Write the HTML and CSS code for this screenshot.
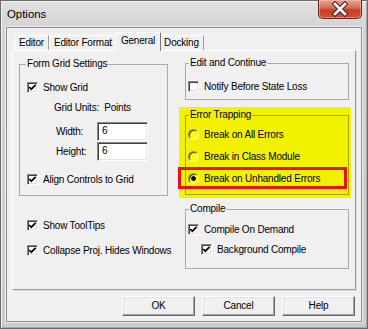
FILE: index.html
```html
<!DOCTYPE html>
<html>
<head>
<meta charset="utf-8">
<link rel="stylesheet" href="styles.css">
</head>
<body>
<div class="window">
  <div class="titlebar">
    <span class="title">Options</span>
    <div class="close">
      <svg width="42" height="18" viewBox="0 0 42 18">
        <path d="M16 4 L26 14 M26 4 L16 14" stroke="#3a2a28" stroke-width="4.6" stroke-linecap="square"/>
        <path d="M16 4 L26 14 M26 4 L16 14" stroke="#ffffff" stroke-width="2.6" stroke-linecap="square"/>
      </svg>
    </div>
  </div>
  <div class="client">
    <div class="tabs">
      <div class="tab">Editor</div>
      <div class="tab">Editor Format</div>
      <div class="tab active">General</div>
      <div class="tab">Docking</div>
    </div>
    <div class="panel">
      <div class="col col-left">
        <fieldset class="group grid-group">
          <legend>Form Grid Settings</legend>
          <div class="row"><span class="box"><svg width="9" height="9" viewBox="0 0 9 9"><polyline points="1.3,4 3.3,6.2 7.6,1.8" fill="none" stroke="#000" stroke-width="1.7"/></svg></span>Show Grid</div>
          <div class="units">Grid Units:&nbsp; Points</div>
          <div class="field first"><span class="flabel">Width:</span><span class="input">6</span></div>
          <div class="field"><span class="flabel">Height:</span><span class="input">6</span></div>
          <div class="row align"><span class="box"><svg width="9" height="9" viewBox="0 0 9 9"><polyline points="1.3,4 3.3,6.2 7.6,1.8" fill="none" stroke="#000" stroke-width="1.7"/></svg></span>Align Controls to Grid</div>
        </fieldset>
        <div class="row outer tips"><span class="box"><svg width="9" height="9" viewBox="0 0 9 9"><polyline points="1.3,4 3.3,6.2 7.6,1.8" fill="none" stroke="#000" stroke-width="1.7"/></svg></span>Show ToolTips</div>
        <div class="row outer collapse"><span class="box"><svg width="9" height="9" viewBox="0 0 9 9"><polyline points="1.3,4 3.3,6.2 7.6,1.8" fill="none" stroke="#000" stroke-width="1.7"/></svg></span>Collapse Proj. Hides Windows</div>
      </div>
      <div class="col col-right">
        <fieldset class="group edit-group">
          <legend>Edit and Continue</legend>
          <div class="row"><span class="box"></span>Notify Before State Loss</div>
        </fieldset>
        <div class="highlight">
          <fieldset class="group error-group">
            <legend>Error Trapping</legend>
            <div class="row"><span class="radio"></span>Break on All Errors</div>
            <div class="row r2"><span class="radio"></span>Break in Class Module</div>
            <div class="row r2 marked"><span class="radio on"></span>Break on Unhandled Errors</div>
          </fieldset>
        </div>
        <fieldset class="group compile-group">
          <legend>Compile</legend>
          <div class="row"><span class="box"><svg width="9" height="9" viewBox="0 0 9 9"><polyline points="1.3,4 3.3,6.2 7.6,1.8" fill="none" stroke="#000" stroke-width="1.7"/></svg></span>Compile On Demand</div>
          <div class="row bg"><span class="box"><svg width="9" height="9" viewBox="0 0 9 9"><polyline points="1.3,4 3.3,6.2 7.6,1.8" fill="none" stroke="#000" stroke-width="1.7"/></svg></span>Background Compile</div>
        </fieldset>
      </div>
    </div>
    <div class="buttons">
      <div class="btn">OK</div>
      <div class="btn">Cancel</div>
      <div class="btn">Help</div>
    </div>
  </div>
</div>
</body>
</html>
```

FILE: styles.css
```css
* { box-sizing: border-box; }
html, body { margin: 0; padding: 0; }
body {
  width: 368px;
  height: 329px;
  overflow: hidden;
  font-family: "Liberation Sans", Arial, sans-serif;
  font-size: 10px;
  letter-spacing: -0.2px;
  color: #000;
  background: #c8c8c8;
}
.window {
  width: 368px;
  height: 329px;
  border: 1px solid #6a6a6a;
  background: linear-gradient(#e0e0e0, #d4d4d4 28px, #cbcbcb);
  box-shadow: inset 1px 1px 0 #f2f2f2, inset -1px -1px 0 #a8a8a8;
  padding: 0 5px 6px 5px;
  display: flex;
  flex-direction: column;
}
.titlebar {
  height: 26px;
  display: flex;
  justify-content: space-between;
  align-items: flex-start;
}
.title {
  font-size: 11.4px;
  letter-spacing: 0;
  line-height: 14px;
  margin: 6px 0 0 1px;
  color: #000;
}
.close {
  width: 44px;
  height: 19px;
  margin-top: -1px;
  border: 1px solid #5b2a22;
  border-top: none;
  border-radius: 0 0 5px 5px;
  background: linear-gradient(#e9a093, #d86a55 45%, #c73c26 55%, #cf5034);
  box-shadow: inset 0 0 0 1px rgba(255, 200, 190, 0.5);
}
.close svg { display: block; }
.client {
  flex: 1;
  background: #f0f0f0;
  border: 1px solid #8e8e8e;
  box-shadow: 0 0 0 1px #ededed;
  padding: 4px 5px 5px 5px;
  display: flex;
  flex-direction: column;
}
.tabs {
  display: flex;
  align-items: flex-end;
  height: 18px;
  padding-left: 2px;
  position: relative;
  z-index: 1;
}
.tab {
  height: 15px;
  line-height: 13px;
  padding: 0 4px;
  border-left: 1px solid #fff;
  border-top: 1px solid #fff;
  border-right: 1px solid #9a9a9a;
  background: #f0f0f0;
  white-space: nowrap;
}
.tab.active {
  height: 19px;
  line-height: 16px;
  margin: 0 -2px -1px -2px;
  padding: 0 5px;
  position: relative;
  z-index: 2;
  border-right-color: #7a7a7a;
}
.panel {
  height: 240px;
  border: 1px solid;
  border-color: #fff #9a9a9a #9a9a9a #fff;
  box-shadow: 1px 1px 0 #dcdcdc;
  display: grid;
  grid-template-columns: 149px 164px;
  column-gap: 17px;
  padding-left: 6px;
  align-items: start;
}
.col-left { padding-top: 7px; }
.col-right { padding-top: 6px; }
.group {
  margin: 0;
  min-width: 0;
  border: 1px solid #a9a9a9;
  padding: 0 0 0 2px;
}
.group legend {
  line-height: 12px;
  padding: 0 1px;
  margin-left: 1px;
}
.grid-group {
  padding: 11px 0 9px 7px;
}
.grid-group legend { margin-left: -1px; }
.row {
  display: flex;
  align-items: center;
  height: 13px;
  line-height: 13px;
  gap: 5px;
  white-space: nowrap;
}
.box {
  width: 11px;
  height: 11px;
  flex: none;
  background: #fff;
  border: 1px solid;
  border-color: #8a8a8a #fff #fff #8a8a8a;
  box-shadow: inset 1px 1px 0 #404040, inset -1px -1px 0 #dcdcdc;
  position: relative;
}
.box svg {
  position: absolute;
  left: 0;
  top: 0;
}
.units {
  margin: 7px 0 0 27px;
  height: 13px;
  line-height: 13px;
}
.field {
  display: flex;
  align-items: center;
  margin: 1px 0 0 29px;
  height: 19px;
}
.field.first { margin-top: 8px; }
.flabel { width: 41px; line-height: 13px; padding-bottom: 1px; }
.input {
  width: 51px;
  height: 19px;
  background: #fff;
  border: 1px solid;
  border-color: #8a8a8a #fff #fff #8a8a8a;
  box-shadow: inset 1px 1px 0 #404040, inset -1px -1px 0 #e3e3e3;
  padding-left: 4px;
  line-height: 15px;
}
.row.align { margin-top: 12px; }
.row.outer { margin-left: 8px; }
.row.tips { margin-top: 23px; }
.row.collapse { margin-top: 12px; }
.edit-group { padding: 11px 0 6px 2px; }
.highlight {
  margin: 7px -2px 0 -6px;
  padding: 2px 2px 3px 6px;
  background: #f2f200;
}
.error-group {
  padding: 7px 0 9px 2px;
  border-color: #a4a400;
}
.row.r2 { margin-top: 9px; }
.radio {
  width: 11px;
  height: 11px;
  flex: none;
  border-radius: 50%;
  background: #ffff00;
  border: 1px solid;
  border-color: #8a8a6a #f8f8a0 #f8f8a0 #8a8a6a;
  box-shadow: inset 1px 1px 0 #505030;
}
.radio.on {
  background: radial-gradient(circle at 50% 50%, #000 0, #000 2px, #ffff00 2.6px);
}
.row.marked { position: relative; }
.row.marked::after {
  content: "";
  position: absolute;
  left: -10px;
  right: 1px;
  top: -5px;
  bottom: -4px;
  border: 3px solid #e8101a;
}
.compile-group {
  margin-top: 5px;
  padding: 8px 0 12px 2px;
}
.row.bg { margin: 7px 0 0 13px; }
.buttons {
  display: flex;
  justify-content: flex-end;
  gap: 7px;
  margin-top: 6px;
  padding-right: 1px;
}
.btn {
  width: 73px;
  height: 20px;
  background: #f0f0f0;
  border: 1px solid;
  border-color: #fff #696969 #696969 #fff;
  box-shadow: inset -1px -1px 0 #a0a0a0, inset 1px 1px 0 #e3e3e3;
  text-align: center;
  line-height: 18px;
}
```
